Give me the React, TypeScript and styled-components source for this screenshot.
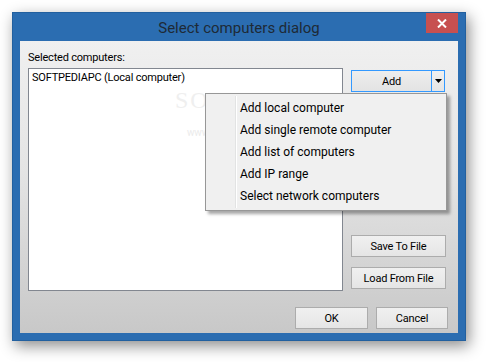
import React from 'react';
import styled, {createGlobalStyle} from 'styled-components';

const GlobalStyle = createGlobalStyle`
    html, body {
        margin: 0;
        padding: 0;
        background: #ffffff;
        width: 486px;
        height: 362px;
        overflow: hidden;
    }
`;

const Page = styled.div`
    padding: 12px 20px 21px 12px;
    font-family: Roboto, 'Noto Sans', sans-serif;
    font-size: 11px;
    letter-spacing: -0.2px;
    color: #000;
`;

const Window = styled.div`
    width: 454px;
    height: 329px;
    box-sizing: border-box;
    background: #2b6db1;
    border: 1px solid #22609f;
    box-shadow: 3px 5px 14px rgba(0, 0, 0, 0.45);
    display: flex;
    flex-direction: column;
    padding: 0 7px 7px 7px;
`;

const TitleBar = styled.div`
    position: relative;
    height: 29px;
    display: flex;
    align-items: center;
    justify-content: center;
`;

const Title = styled.div`
    font-size: 15px;
    letter-spacing: 0;
    color: #1e2a36;
    padding-top: 1px;
`;

const CloseButton = styled.div`
    position: absolute;
    top: 0;
    right: 0;
    width: 32px;
    height: 20px;
    background: #c75050;
    display: flex;
    align-items: center;
    justify-content: center;
`;

const Client = styled.div`
    flex: 1;
    background: linear-gradient(#f0f0f0 0%, #e4e4e4 45%, #c8c8c8 100%);
    display: grid;
    grid-template-rows: auto 1fr auto;
    padding: 8px 11px 4px 8px;
`;

const Label = styled.div`
    line-height: 16px;
    height: 16px;
    margin-bottom: 2px;
    margin-top: 1px;
`;

const Main = styled.div`
    display: grid;
    grid-template-columns: 315px 1fr;
    column-gap: 8px;
`;

const ListBox = styled.div`
    height: 223px;
    box-sizing: border-box;
    background: #fff;
    border: 1px solid #828790;
    padding: 1px 3px;
    line-height: 15px;
    position: relative;
    overflow: hidden;
`;

const Watermark = styled.div`
    position: absolute;
    left: 146px;
    top: 24px;
    font-family: 'Liberation Serif', serif;
    font-size: 24px;
    letter-spacing: 2px;
    color: #efefef;
`;

const WatermarkUrl = styled.div`
    position: absolute;
    left: 158px;
    top: 56px;
    font-size: 10px;
    color: #ebebeb;
`;

const Side = styled.div`
    display: flex;
    flex-direction: column;
    padding-top: 2px;
    width: 95px;
`;

const Button = styled.div<{$width?: number}>`
    width: ${p => (p.$width ? `${p.$width}px` : '100%')};
    height: 22px;
    box-sizing: border-box;
    background: linear-gradient(#f0f0f0, #e5e5e5);
    border: 1px solid #acacac;
    display: flex;
    align-items: center;
    justify-content: center;
`;

const SplitWrap = styled.div`
    position: relative;
    display: flex;
    width: 94px;
`;

const SplitMain = styled(Button)`
    flex: 1;
    border-color: #3399ff;
    background: linear-gradient(#eeeeee, #e3e3e3);
`;

const SplitArrow = styled(Button)`
    width: 13px;
    border-color: #3399ff;
    border-left: none;
`;

const Spacer = styled.div`
    flex: 1;
`;

const SideButton = styled(Button)<{$gap: number}>`
    margin-bottom: ${p => p.$gap}px;
`;

const Footer = styled.div`
    display: flex;
    justify-content: flex-end;
    gap: 8px;
    padding-top: 16px;
    margin-right: -1px;
`;

const Menu = styled.div`
    position: absolute;
    top: 23px;
    right: -2px;
    width: 242px;
    box-sizing: border-box;
    background: #f0f0f0;
    border: 1px solid #979797;
    box-shadow: 3px 3px 3px rgba(0, 0, 0, 0.35);
    padding: 3px 2px 3px 2px;
    z-index: 5;
`;

const Gutter = styled.div`
    position: absolute;
    left: 29px;
    top: 2px;
    bottom: 2px;
    width: 1px;
    background: #e2e3e3;
    border-right: 1px solid #fff;
`;

const MenuItem = styled.div`
    height: 22px;
    line-height: 22px;
    padding-left: 32px;
    font-size: 12px;
    letter-spacing: 0;
`;

const menuItems = [
    'Add local computer',
    'Add single remote computer',
    'Add list of computers',
    'Add IP range',
    'Select network computers',
];

const App = () => {
    return (
        <Page>
            <GlobalStyle/>
            <Window>
                <TitleBar>
                    <Title>{'Select computers dialog'}</Title>
                    <CloseButton>
                        <svg width='10' height='9' viewBox='0 0 10 9'>
                            <path d='M1 0.5 L9 8.5 M9 0.5 L1 8.5' stroke='#fff' strokeWidth='2'/>
                        </svg>
                    </CloseButton>
                </TitleBar>
                <Client>
                    <Label>{'Selected computers:'}</Label>
                    <Main>
                        <ListBox>
                            {'SOFTPEDIAPC (Local computer)'}
                            <Watermark>{'SOFTPEDIA'}</Watermark>
                            <WatermarkUrl>{'www.softpedia.com'}</WatermarkUrl>
                        </ListBox>
                        <Side>
                            <SplitWrap>
                                <SplitMain>{'Add'}</SplitMain>
                                <SplitArrow>
                                    <svg width='7' height='4' viewBox='0 0 7 4'>
                                        <path d='M0 0 H7 L3.5 4 Z' fill='#000'/>
                                    </svg>
                                </SplitArrow>
                                <Menu>
                                    <Gutter/>
                                    {menuItems.map(item => (
                                        <MenuItem key={item}>{item}</MenuItem>
                                    ))}
                                </Menu>
                            </SplitWrap>
                            <Spacer/>
                            <SideButton $gap={10}>{'Save To File'}</SideButton>
                            <SideButton $gap={2}>{'Load From File'}</SideButton>
                        </Side>
                    </Main>
                    <Footer>
                        <Button $width={73}>{'OK'}</Button>
                        <Button $width={72}>{'Cancel'}</Button>
                    </Footer>
                </Client>
            </Window>
        </Page>
    );
};

export default App;
